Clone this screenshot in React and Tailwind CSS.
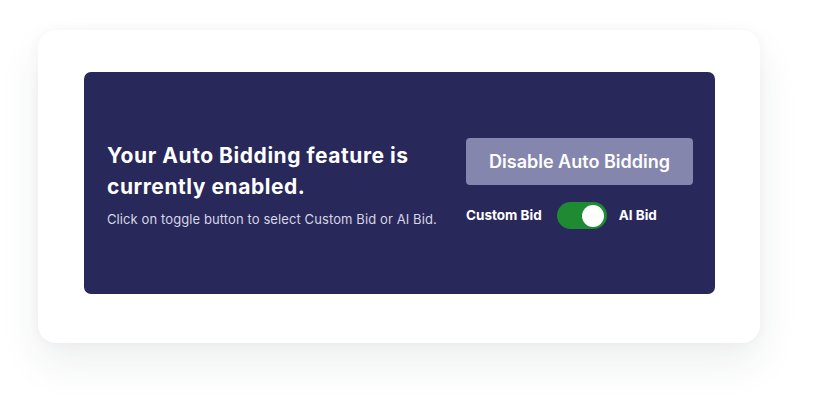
import { useState } from 'react';

export default function App() {
  const [aiBid, setAiBid] = useState(true);

  return (
    <div className="w-[818px] h-[406px] bg-white pl-[38px] pt-[30px]" style={{ fontFamily: 'Inter, "Noto Sans", sans-serif' }}>
      <div className="w-[722px] h-[313px] bg-white rounded-[18px] shadow-[0_20px_40px_rgba(40,50,70,0.08),0_0_12px_rgba(40,50,70,0.04)] pl-[46px] pt-[42px]">
        <div className="w-[631px] h-[222px] bg-[#28285a] rounded-[7px] flex items-center justify-between pl-[23px] pr-[22px]">
          <div className="flex flex-col">
            <h2 className="text-white text-[21px] font-bold leading-[31px] tracking-[0.55px] w-[330px]">
              Your Auto Bidding feature is currently enabled.
            </h2>
            <p className="mt-[9px] text-[13px] text-[#d6d6e6] leading-[16px] tracking-[0.1px]">
              Click on toggle button to select Custom Bid or AI Bid.
            </p>
          </div>
          <div className="flex flex-col gap-[17px] mt-[1px]">
            <button className="w-[227px] h-[47px] rounded-[4px] bg-[#8586ad] text-white text-[18px] font-semibold">
              Disable Auto Bidding
            </button>
            <div className="flex items-center">
              <span className="text-white text-[13.5px] font-bold">Custom Bid</span>
              <button
                onClick={() => setAiBid(!aiBid)}
                className={`ml-[15px] w-[50px] h-[27px] rounded-full flex items-center px-[3px] ${aiBid ? 'bg-[#1e8a32] justify-end' : 'bg-[#8586ad] justify-start'}`}
              >
                <span className="w-[22px] h-[22px] rounded-full bg-white block" />
              </button>
              <span className="ml-[12px] text-white text-[13.5px] font-bold">AI Bid</span>
            </div>
          </div>
        </div>
      </div>
    </div>
  );
}
